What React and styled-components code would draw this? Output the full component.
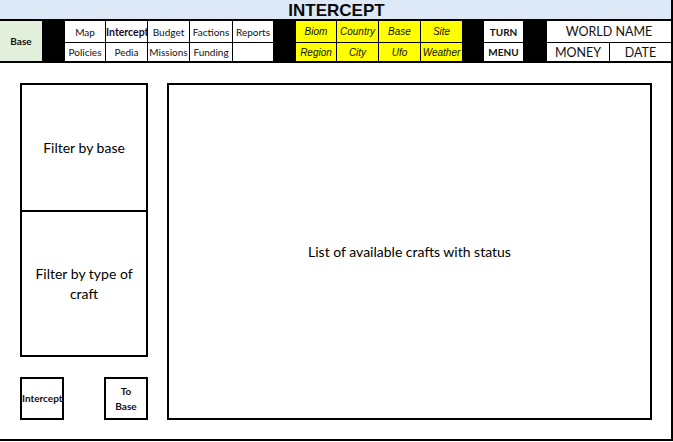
import React from "react";
import styled, { createGlobalStyle } from "styled-components";

const Global = createGlobalStyle`
  html, body { margin: 0; padding: 0; background: #fff; }
  body { font-family: Lato, "Liberation Sans", sans-serif; color: #000; }
`;

const Frame = styled.div`
  width: 671px;
  height: 439px;
  border-right: 2px solid #000;
  border-bottom: 2px solid #000;
  display: flex;
  flex-direction: column;
`;

const TitleBar = styled.div`
  height: 19px;
  background: #dde9f7;
  display: flex;
  align-items: center;
  justify-content: center;
  font-family: "Liberation Sans", Arial, sans-serif;
  font-weight: 700;
  font-size: 17px;
  line-height: 19px;
  color: #0a0a0a;
  padding: 1px 0 0 2px;
  box-sizing: border-box;
`;

const Nav = styled.div`
  display: grid;
  grid-template-columns: 42px 21px 40px 41px 41px 42px 40px 21px 40px 41px 41px 41px 20px 39px 22px 62px 1fr;
  grid-template-rows: 21px 18px;
  column-gap: 1px;
  row-gap: 1px;
  background: #000;
  border-top: 2px solid #000;
  border-bottom: 2px solid #000;
`;

const Cell = styled.div`
  background: ${(p) => p.$bg || "#fff"};
  grid-row: ${(p) => p.$row || "auto"};
  grid-column: ${(p) => p.$col || "auto"};
  display: flex;
  align-items: center;
  justify-content: ${(p) => (p.$left ? "flex-start" : "center")};
  white-space: nowrap;
  overflow: hidden;
  font-size: ${(p) => p.$size || 10}px;
  font-weight: ${(p) => (p.$bold ? 700 : 400)};
  font-style: ${(p) => (p.$italic ? "italic" : "normal")};
  font-family: ${(p) =>
    p.$italic ? '"Liberation Sans", Arial, sans-serif' : 'Lato, "Liberation Sans", sans-serif'};
  color: ${(p) => p.$color || "#111"};
`;

const BlackCell = styled.div`
  background: #000;
  grid-row: 1 / span 2;
  grid-column: ${(p) => p.$col};
`;

const Body = styled.div`
  flex: 1;
  display: flex;
  gap: 19px;
  padding: 20px 19px 19px 20px;
`;

const LeftCol = styled.div`
  width: 128px;
  display: flex;
  flex-direction: column;
`;

const FilterStack = styled.div`
  display: flex;
  flex-direction: column;
  border: 2px solid #000;
`;

const FilterBox = styled.div`
  height: ${(p) => p.$h}px;
  display: flex;
  align-items: center;
  justify-content: center;
  text-align: center;
  font-size: 14px;
  line-height: 20px;
  padding: 0 10px;
  border-top: ${(p) => (p.$first ? "none" : "2px solid #000")};
`;

const Buttons = styled.div`
  margin-top: 20px;
  display: flex;
  justify-content: space-between;
`;

const Btn = styled.div`
  width: 40px;
  height: 39px;
  border: 2px solid #000;
  display: flex;
  align-items: center;
  justify-content: ${(p) => (p.$nowrap ? "flex-start" : "center")};
  text-align: center;
  font-family: Lato, "Liberation Sans", Arial, sans-serif;
  font-weight: 700;
  font-size: 10px;
  line-height: 15px;
  overflow: hidden;
  white-space: ${(p) => (p.$nowrap ? "nowrap" : "normal")};
  color: #111;
`;

const MainPanel = styled.div`
  flex: 1;
  height: 333px;
  border: 2px solid #000;
  display: flex;
  align-items: center;
  justify-content: center;
  font-size: 14px;
`;

export default function App() {
  return (
    <>
      <Global />
      <Frame>
        <TitleBar>INTERCEPT</TitleBar>
        <Nav>
          <Cell $bg="#e2efda" $row="1 / span 2" $col="1" $bold $size={10}>Base</Cell>
          <BlackCell $col="2" />
          <Cell $row="1" $col="3">Map</Cell>
          <Cell $row="1" $col="4" $bold $left $color="#1b0a2a" $size={10.5}>Intercept</Cell>
          <Cell $row="1" $col="5">Budget</Cell>
          <Cell $row="1" $col="6">Factions</Cell>
          <Cell $row="1" $col="7">Reports</Cell>
          <Cell $row="2" $col="3">Policies</Cell>
          <Cell $row="2" $col="4">Pedia</Cell>
          <Cell $row="2" $col="5">Missions</Cell>
          <Cell $row="2" $col="6">Funding</Cell>
          <Cell $row="2" $col="7" />
          <BlackCell $col="8" />
          <Cell $row="1" $col="9" $bg="#ffff00" $italic>Biom</Cell>
          <Cell $row="1" $col="10" $bg="#ffff00" $italic>Country</Cell>
          <Cell $row="1" $col="11" $bg="#ffff00" $italic>Base</Cell>
          <Cell $row="1" $col="12" $bg="#ffff00" $italic>Site</Cell>
          <Cell $row="2" $col="9" $bg="#ffff00" $italic>Region</Cell>
          <Cell $row="2" $col="10" $bg="#ffff00" $italic>City</Cell>
          <Cell $row="2" $col="11" $bg="#ffff00" $italic>Ufo</Cell>
          <Cell $row="2" $col="12" $bg="#ffff00" $italic>Weather</Cell>
          <BlackCell $col="13" />
          <Cell $row="1" $col="14" $bold $size={10}>TURN</Cell>
          <Cell $row="2" $col="14" $bold $size={10}>MENU</Cell>
          <BlackCell $col="15" />
          <Cell $row="1" $col="16 / span 2" $size={12.5}>WORLD NAME</Cell>
          <Cell $row="2" $col="16" $size={12.5}>MONEY</Cell>
          <Cell $row="2" $col="17" $size={12.5}>DATE</Cell>
        </Nav>
        <Body>
          <LeftCol>
            <FilterStack>
              <FilterBox $first $h={125}>Filter by base</FilterBox>
              <FilterBox $h={143}>Filter by type of craft</FilterBox>
            </FilterStack>
            <Buttons>
              <Btn $nowrap>Intercept</Btn>
              <Btn>To<br />Base</Btn>
            </Buttons>
          </LeftCol>
          <MainPanel>List of available crafts with status</MainPanel>
        </Body>
      </Frame>
    </>
  );
}
